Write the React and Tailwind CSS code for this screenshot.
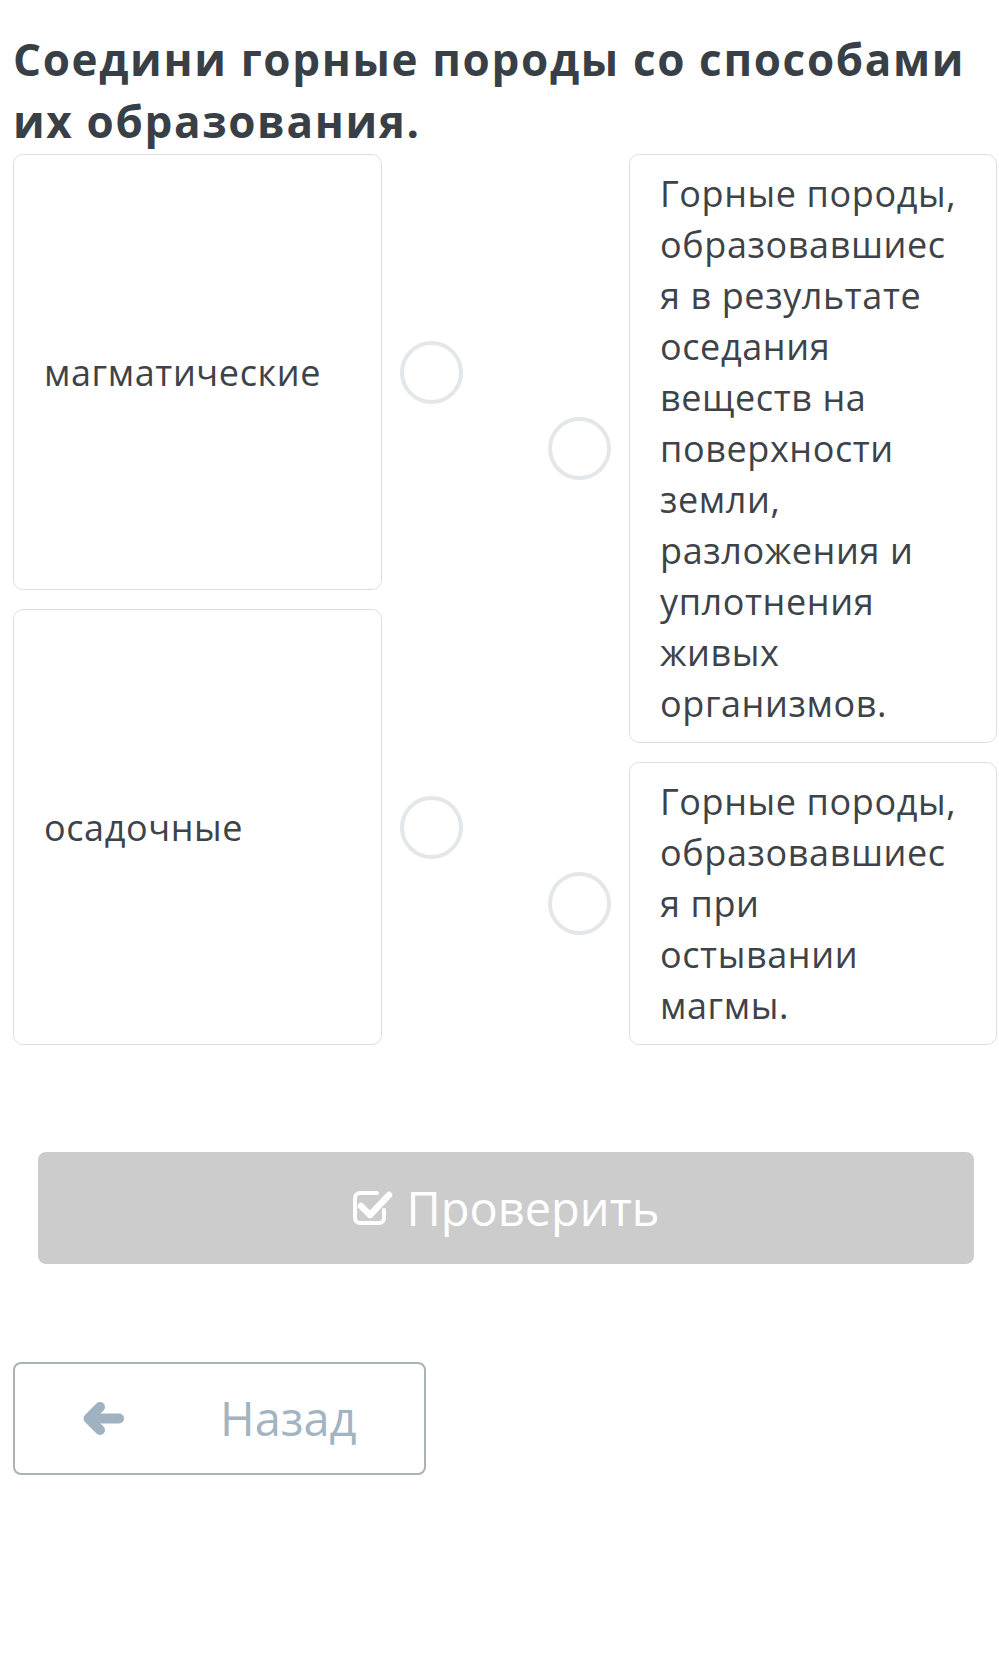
import React from "react";

const leftItems = ["магматические", "осадочные"];

const rightItems = [
  [
    "Горные породы,",
    "образовавшиес",
    "я в результате",
    "оседания",
    "веществ на",
    "поверхности",
    "земли,",
    "разложения и",
    "уплотнения",
    "живых",
    "организмов.",
  ],
  ["Горные породы,", "образовавшиес", "я при", "остывании", "магмы."],
];

const Dot = () => (
  <div className="w-[63px] h-[63px] shrink-0 rounded-full border-4 border-[#e4e7ea]" />
);

const CheckIcon = () => (
  <svg width="42" height="38" viewBox="0 0 42 38" fill="none">
    <path
      d="M25 4 H8 a5 5 0 0 0 -5 5 V29 a5 5 0 0 0 5 5 H27 a5 5 0 0 0 5 -5 V21"
      stroke="white"
      strokeWidth="4"
      strokeLinecap="round"
    />
    <path
      d="M9 17 L18 26 L37 6"
      stroke="white"
      strokeWidth="6.5"
      strokeLinecap="round"
      strokeLinejoin="round"
    />
  </svg>
);

const ArrowIcon = () => (
  <svg width="41" height="33" viewBox="0 0 41 33" fill="none">
    <path
      d="M17 5 L5.5 16.5 L17 28"
      stroke="#9fb2c1"
      strokeWidth="10"
      strokeLinecap="round"
      strokeLinejoin="round"
    />
    <path d="M8 16.5 H36" stroke="#9fb2c1" strokeWidth="10" strokeLinecap="round" />
  </svg>
);

export default function App() {
  return (
    <div
      className="min-h-[1657px] bg-white text-[#3d4349]"
      style={{ fontFamily: '"Open Sans", "Noto Sans", sans-serif' }}
    >
      <h1 className="pt-[28px] pl-[13px] text-[44px] leading-[62px] font-bold tracking-[1.65px] text-[#393f46] whitespace-nowrap">
        Соедини горные породы со способами
        <br />
        их образования.
      </h1>

      <div className="mt-[2px] flex justify-between pl-[13px] pr-px">
        <div className="flex w-[450px] flex-col gap-[19px]">
          {leftItems.map((text) => (
            <div key={text} className="flex flex-1 items-center gap-[18px]">
              <div className="flex h-full w-[369px] items-center rounded-[10px] border border-[#dcdfe2] px-[30px] text-[36px] leading-[51px] tracking-[0.6px]">
                {text}
              </div>
              <Dot />
            </div>
          ))}
        </div>

        <div className="flex w-[450px] flex-col gap-[19px]">
          {rightItems.map((lines, i) => (
            <div key={i} className="flex items-center gap-[18px]">
              <Dot />
              <div className="w-[368px] rounded-[10px] border border-[#dcdfe2] px-[30px] py-[13px] text-[36px] leading-[51px] tracking-[0.6px]">
                {lines.map((line) => (
                  <div key={line} className="whitespace-nowrap">
                    {line}
                  </div>
                ))}
              </div>
            </div>
          ))}
        </div>
      </div>

      <div className="mt-[107px] ml-[38px] flex h-[112px] w-[936px] items-center justify-center gap-[12px] rounded-[8px] bg-[#cccccc] text-white">
        <CheckIcon />
        <span className="text-[47px] leading-none">Проверить</span>
      </div>

      <div className="mt-[98px] ml-[13px] flex h-[113px] w-[413px] items-center rounded-[8px] border-2 border-[#aab1b7] pl-[68px]">
        <ArrowIcon />
        <span className="ml-[96px] text-[47px] leading-none text-[#a2b3c1]">Назад</span>
      </div>
    </div>
  );
}
